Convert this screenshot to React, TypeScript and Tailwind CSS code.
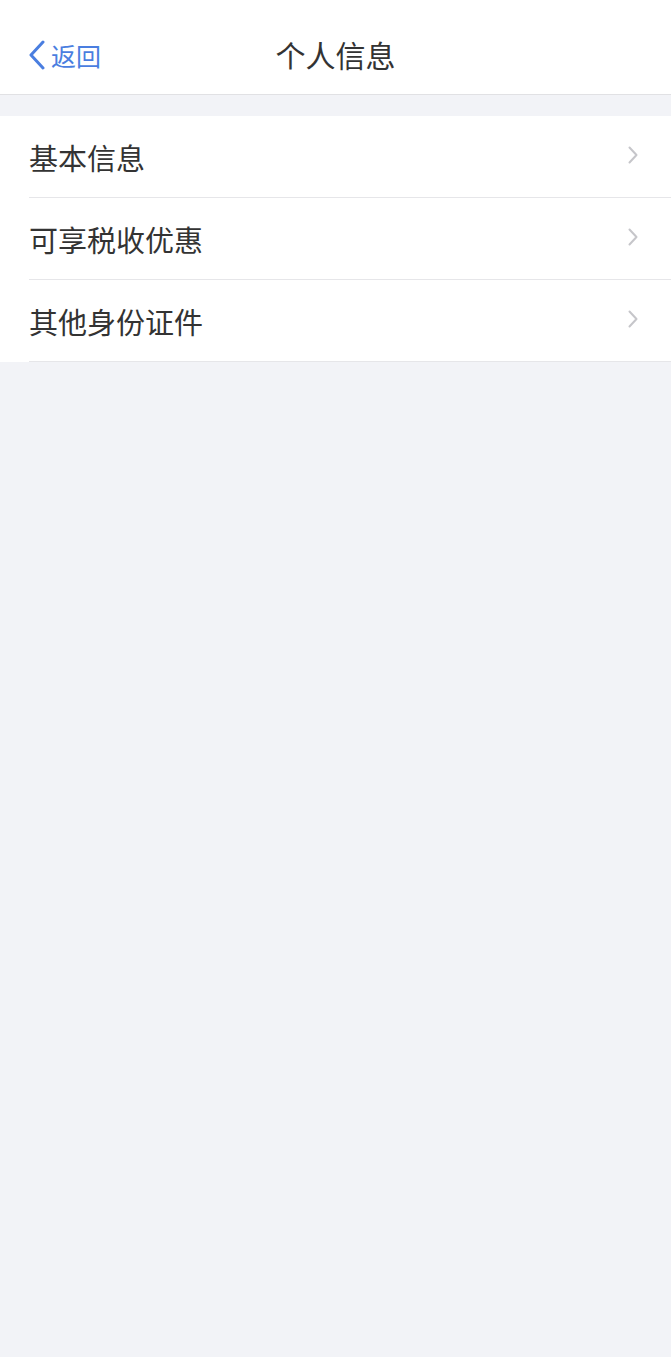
const items = ['基本信息', '可享税收优惠', '其他身份证件']

export default function App() {
  return (
    <div
      className="min-h-[1357px] w-full bg-[#f2f3f7]"
      style={{ fontFamily: '"PingFang SC", "Noto Sans CJK SC", sans-serif' }}
    >
      {/* Header */}
      <div className="relative h-[95px] flex items-center justify-center bg-white border-b border-[#e1e1e4]">
        <button className="absolute left-[28px] top-[40px] flex items-center text-[#4a7ee0]">
          <svg width="17" height="30" viewBox="0 0 17 30" fill="none">
            <polyline points="15,2 3,15 15,28" stroke="currentColor" strokeWidth="3" strokeLinecap="round" strokeLinejoin="round" />
          </svg>
          <span className="text-[25px] leading-none ml-[6px] mt-[1px]">返回</span>
        </button>
        <h1 className="text-[30px] text-[#333333] pt-[14px]">个人信息</h1>
      </div>

      {/* List */}
      <div className="mt-[21px] bg-white">
        {items.map((label) => (
          <div key={label} className="pl-[29px]">
            <div className="h-[82px] flex items-center justify-between border-b border-[#e6e6e9] pr-[33px]">
              <span className="text-[29px] text-[#333333] pt-[2px]">{label}</span>
              <svg width="10" height="18" viewBox="0 0 10 18" fill="none" className="-mt-[4px] text-[#c6c6ca]">
                <polyline points="1.5,1.5 8.5,9 1.5,16.5" stroke="currentColor" strokeWidth="2" strokeLinecap="round" strokeLinejoin="round" />
              </svg>
            </div>
          </div>
        ))}
      </div>
    </div>
  )
}
